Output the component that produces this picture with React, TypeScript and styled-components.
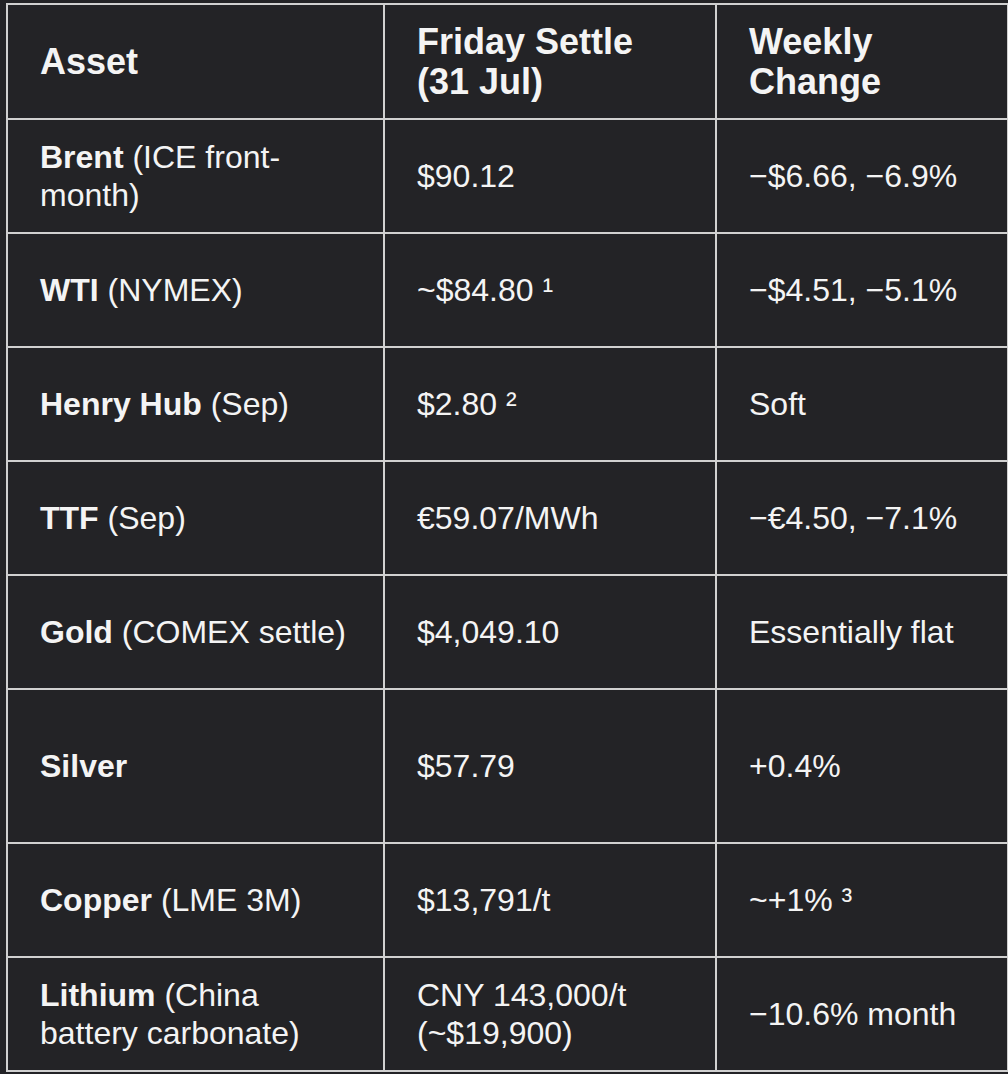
import React from "react";
import styled, { createGlobalStyle } from "styled-components";

const GlobalStyle = createGlobalStyle`
  html, body {
    margin: 0;
    background: #232326;
  }
  body {
    padding: 3px 0 0 6px;
    font-family: "Liberation Sans", Arial, Helvetica, sans-serif;
  }
`;

const Table = styled.table`
  width: 1001px;
  border-collapse: collapse;
  table-layout: fixed;
  color: #f4f4f4;
  border: 2px solid #d0d0d0;
`;

const Row = styled.tr<{ $h: number }>`
  height: ${(p) => p.$h}px;
`;

const HeadCell = styled.th`
  border: 2px solid #d0d0d0;
  padding: 0 32px;
  text-align: left;
  vertical-align: middle;
  font-size: 36px;
  line-height: 40px;
  font-weight: bold;
`;

const Cell = styled.td`
  border: 2px solid #d0d0d0;
  padding: 0 32px;
  vertical-align: middle;
  font-size: 32px;
  line-height: 38px;
`;

const Name = styled.b`
  font-weight: bold;
`;

type Item = {
  name: string;
  note?: string;
  settle: React.ReactNode;
  change: string;
  h: number;
};

const rows: Item[] = [
  { name: "Brent", note: "(ICE front-month)", settle: "$90.12", change: "−$6.66, −6.9%", h: 114 },
  { name: "WTI", note: "(NYMEX)", settle: "~$84.80 ¹", change: "−$4.51, −5.1%", h: 114 },
  { name: "Henry Hub", note: "(Sep)", settle: "$2.80 ²", change: "Soft", h: 114 },
  { name: "TTF", note: "(Sep)", settle: "€59.07/MWh", change: "−€4.50, −7.1%", h: 114 },
  { name: "Gold", note: "(COMEX settle)", settle: "$4,049.10", change: "Essentially flat", h: 114 },
  { name: "Silver", settle: "$57.79", change: "+0.4%", h: 154 },
  { name: "Copper", note: "(LME 3M)", settle: "$13,791/t", change: "~+1% ³", h: 114 },
  {
    name: "Lithium",
    note: "(China battery carbonate)",
    settle: (
      <>
        CNY 143,000/t
        <br />
        (~$19,900)
      </>
    ),
    change: "−10.6% month",
    h: 114,
  },
];

const App = () => {
  return (
    <>
      <GlobalStyle />
      <Table>
        <colgroup>
          <col style={{ width: 377 }} />
          <col style={{ width: 332 }} />
          <col style={{ width: 292 }} />
        </colgroup>
        <thead>
          <Row $h={115}>
            <HeadCell>Asset</HeadCell>
            <HeadCell>
              Friday Settle
              <br />
              (31 Jul)
            </HeadCell>
            <HeadCell>
              Weekly
              <br />
              Change
            </HeadCell>
          </Row>
        </thead>
        <tbody>
          {rows.map((r) => (
            <Row $h={r.h} key={r.name}>
              <Cell>
                <Name>{r.name}</Name>
                {r.note && <> {r.note}</>}
              </Cell>
              <Cell>{r.settle}</Cell>
              <Cell>{r.change}</Cell>
            </Row>
          ))}
        </tbody>
      </Table>
    </>
  );
};

export default App;
